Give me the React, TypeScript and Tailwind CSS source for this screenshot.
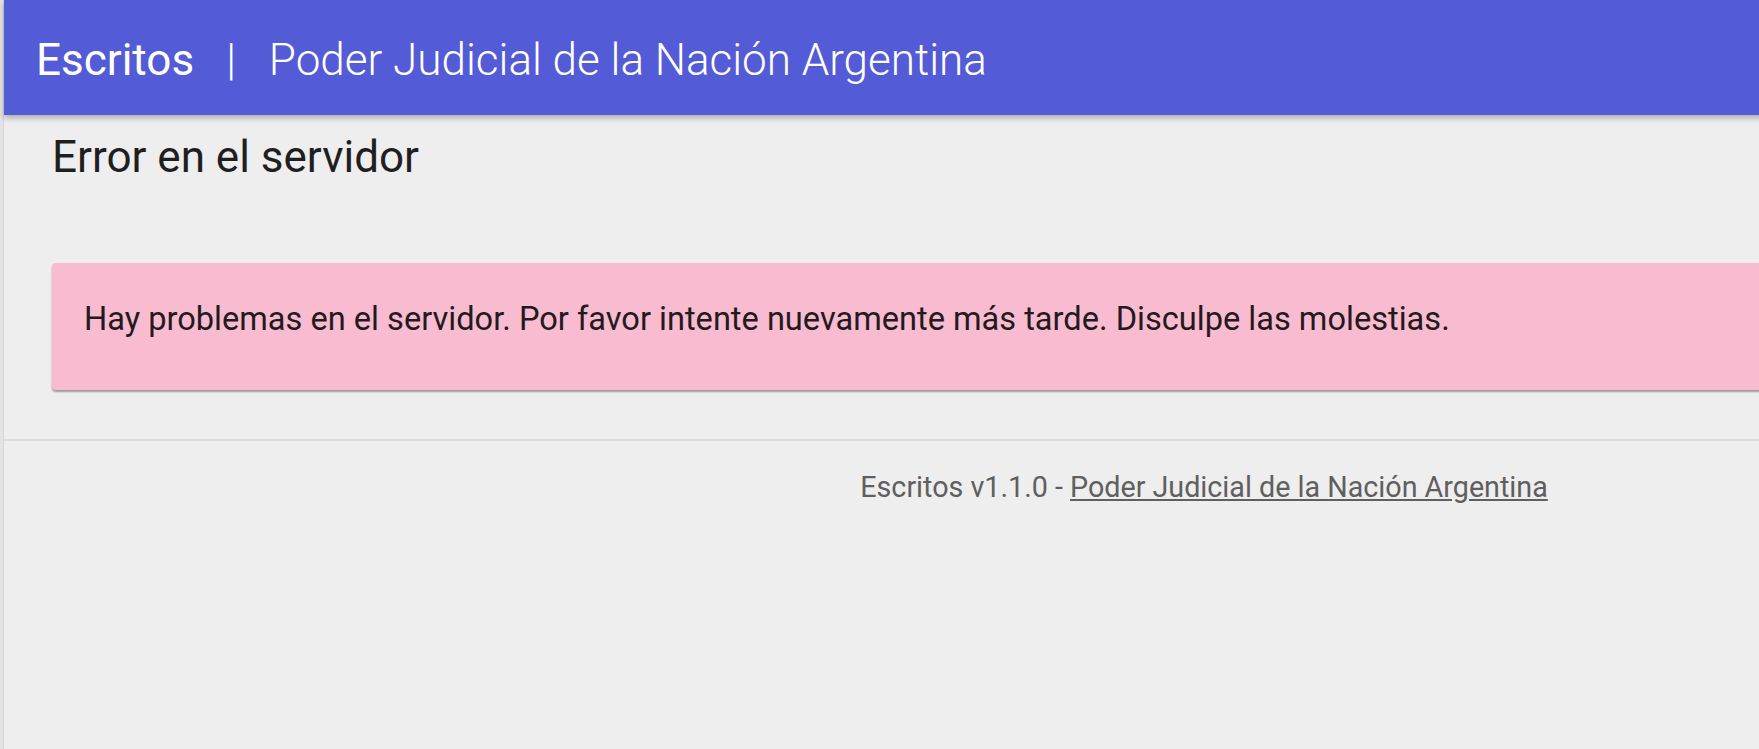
export default function App() {
  return (
    <div className="h-screen w-full overflow-hidden bg-[#eeeeee] font-['Roboto',sans-serif]">
      <div className="flex h-full">
        <div className="w-[3px] shrink-0 bg-[#e4e4e4]" />
        <div className="w-px shrink-0 bg-[#d4d4d4]" />
        <div className="w-[2400px] shrink-0 flex flex-col">
          <header className="relative z-10 h-[115px] bg-[#545bd6] flex items-center pl-[32px] pt-[6px] text-white text-[44px] leading-[1.17] shadow-[0_3px_6px_rgba(0,0,0,0.28)]">
            <span className="font-normal">Escritos</span>
            <span className="font-light pl-[32px] pr-[33px]">|</span>
            <span className="font-light">Poder Judicial de la Nación Argentina</span>
          </header>
          <main className="px-12 pt-[17px] pb-[49px]">
            <h1 className="text-[44px] leading-[1.17] text-[#1f1f1f]">
              Error en el servidor
            </h1>
            <div className="mt-[80px] h-[127px] rounded bg-[#f8bbd0] pl-[32px] pt-[37px] text-[32.6px] leading-[1.17] text-[#231a1d] shadow-[0_2px_2px_rgba(0,0,0,0.35)]">
              Hay problemas en el servidor. Por favor intente nuevamente más tarde. Disculpe las molestias.
            </div>
          </main>
          <div className="h-[2px] bg-[#dcdcdc]" />
          <footer className="pt-[30px] text-center text-[28.7px] leading-[1.17] text-[#5f5f5f]">
            Escritos v1.1.0 -{" "}
            <a href="#" className="underline text-[#5f5f5f]">
              Poder Judicial de la Nación Argentina
            </a>
          </footer>
        </div>
      </div>
    </div>
  );
}
